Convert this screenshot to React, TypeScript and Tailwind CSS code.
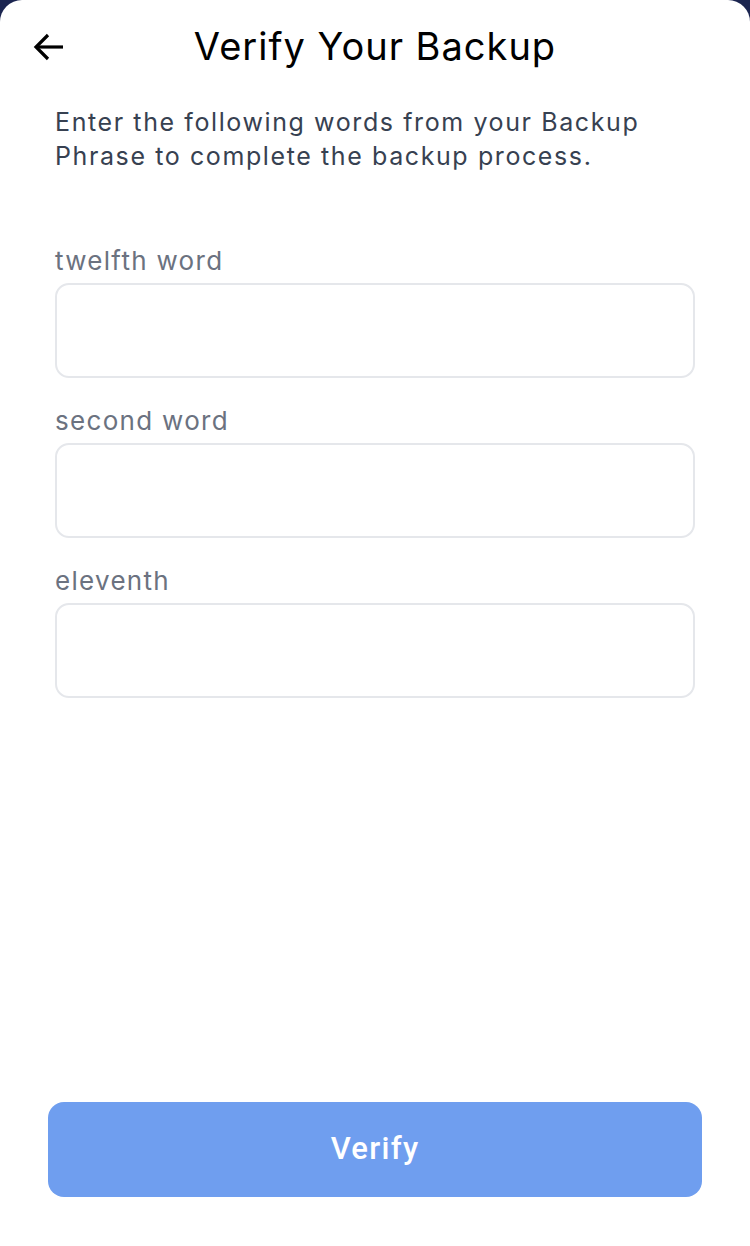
import React from 'react';

function BackArrow() {
  return (
    <svg width="34" height="34" viewBox="0 0 34 34" fill="none" stroke="#000" strokeWidth="3.2" strokeLinecap="butt" strokeLinejoin="miter">
      <path d="M31 17H4" />
      <path d="M16 5L4 17l12 12" />
    </svg>
  );
}

function WordField({ label }: { label: string }) {
  return (
    <div className="flex flex-col">
      <label className="h-[39px] text-[26px] leading-[34px] tracking-[1.3px] text-[#6b7280] font-['Inter',sans-serif]">{label}</label>
      <input className="h-[95px] w-full rounded-[14px] border-2 border-[#e5e7eb] bg-white outline-none" />
    </div>
  );
}

export default function App() {
  return (
    <div className="h-[1246px] w-[750px] bg-[#1b2550]">
      <div className="flex h-full flex-col rounded-t-[22px] bg-white">
        <div className="relative flex h-[92px] items-center justify-center">
          <button className="absolute left-[32px] top-[30px]"><BackArrow /></button>
          <h1 className="text-[38px] tracking-[1px] text-black font-['Inter',sans-serif] font-normal">Verify Your Backup</h1>
        </div>
        <div className="flex flex-1 flex-col px-[55px]">
          <p className="mt-[13px] text-[25px] leading-[34px] tracking-[1.6px] text-[#374151] font-['Inter',sans-serif]">
            Enter the following words from your Backup Phrase to complete the backup process.
          </p>
          <div className="mt-[71px] flex flex-col gap-[26px]">
            <WordField label="twelfth word" />
            <WordField label="second word" />
            <WordField label="eleventh" />
          </div>
        </div>
        <div className="px-[48px] pb-[49px]">
          <button className="flex h-[95px] w-full items-center justify-center rounded-[16px] bg-[#6f9eef] text-[31px] tracking-[1.3px] font-medium text-white font-['Roboto',sans-serif]">
            Verify
          </button>
        </div>
      </div>
    </div>
  );
}
